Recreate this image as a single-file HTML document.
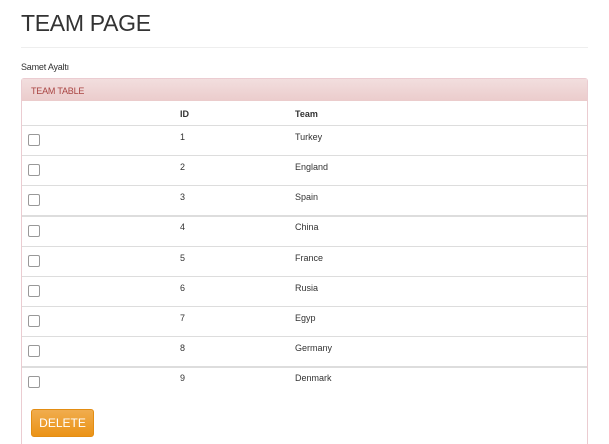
<!DOCTYPE html>
<html><head><meta charset="utf-8"><style>
*{margin:0;padding:0;box-sizing:border-box}
html,body{width:609px;height:444px;overflow:hidden}
body{background:#fff;font-family:"Liberation Sans",sans-serif;color:#333;position:relative}
.a{position:absolute}
h1{position:absolute;left:21px;top:10px;font-size:23px;font-weight:normal;color:#333;letter-spacing:-0.3px}
.hr{left:21px;top:47px;width:567px;height:1px;background:#eee}
.panel{left:21px;top:78px;width:567px;height:370px;border:1px solid #ebccd1;border-radius:3px}
.ph{left:22px;top:79px;width:565px;height:22px;background:linear-gradient(#f2dede,#ebcccc);color:#a94442;font-size:9px;padding:7px 9px;letter-spacing:-0.2px}
.line{left:22px;width:565px;height:1px;background:#ddd}
.t{font-size:9px;color:#333}
.cb{left:28px;width:12px;height:12px;border:1px solid #999;border-radius:2px;background:#fff}
.btn{left:31px;top:409px;width:63px;height:28px;border:1px solid #e38d13;border-radius:3px;background:linear-gradient(#f0ad4e,#eb9316);color:#fff;font-size:12px;text-align:center;line-height:26px}
</style></head><body>
<h1>TEAM PAGE</h1>
<div class="a hr"></div>
<div class="a t" style="left:21px;top:62px;font-size:9px;letter-spacing:-0.2px">Samet Ayaltı</div>
<div class="a panel"></div>
<div class="a ph">TEAM TABLE</div>
<div class="a t" style="left:180px;top:109px;font-weight:bold">ID</div>
<div class="a t" style="left:295px;top:109px;font-weight:bold">Team</div>
<div class="a line" style="top:125px"></div>
<div class="a line" style="top:155px"></div>
<div class="a line" style="top:185px"></div>
<div class="a line" style="top:215px;height:2px"></div>
<div class="a line" style="top:246px"></div>
<div class="a line" style="top:276px"></div>
<div class="a line" style="top:306px"></div>
<div class="a line" style="top:336px"></div>
<div class="a line" style="top:366px;height:2px"></div>
<div class="a cb" style="top:134px"></div><div class="a t" style="left:180px;top:132px">1</div><div class="a t" style="left:295px;top:132px">Turkey</div>
<div class="a cb" style="top:164px"></div><div class="a t" style="left:180px;top:162px">2</div><div class="a t" style="left:295px;top:162px">England</div>
<div class="a cb" style="top:194px"></div><div class="a t" style="left:180px;top:192px">3</div><div class="a t" style="left:295px;top:192px">Spain</div>
<div class="a cb" style="top:225px"></div><div class="a t" style="left:180px;top:222px">4</div><div class="a t" style="left:295px;top:222px">China</div>
<div class="a cb" style="top:255px"></div><div class="a t" style="left:180px;top:253px">5</div><div class="a t" style="left:295px;top:253px">France</div>
<div class="a cb" style="top:285px"></div><div class="a t" style="left:180px;top:283px">6</div><div class="a t" style="left:295px;top:283px">Rusia</div>
<div class="a cb" style="top:315px"></div><div class="a t" style="left:180px;top:313px">7</div><div class="a t" style="left:295px;top:313px">Egyp</div>
<div class="a cb" style="top:345px"></div><div class="a t" style="left:180px;top:343px">8</div><div class="a t" style="left:295px;top:343px">Germany</div>
<div class="a cb" style="top:376px"></div><div class="a t" style="left:180px;top:373px">9</div><div class="a t" style="left:295px;top:373px">Denmark</div>
<div class="a btn">DELETE</div>
</body></html>
